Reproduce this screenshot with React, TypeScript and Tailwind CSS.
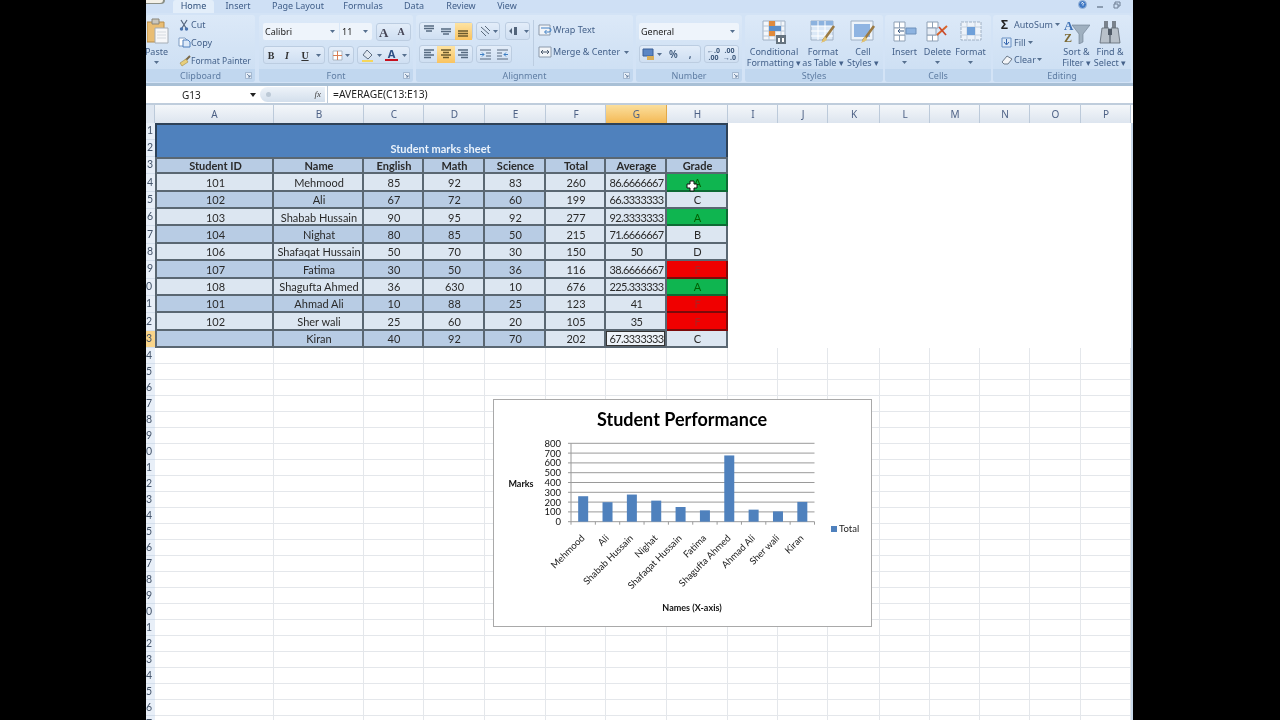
import React from "react";

const ribbonFont = "[font-family:'Noto_Sans',sans-serif]";

const Sv = ({ w = 14, h = 14, vb, children }: { w?: number; h?: number; vb?: string; children: React.ReactNode }) => (
  <svg width={w} height={h} viewBox={vb ?? `0 0 ${w} ${h}`} className="shrink-0">{children}</svg>
);

const Arrow = () => <Sv w={5} h={3}><path d="M0 0h5L2.5 3z" fill="#56708f" /></Sv>;

const Launcher = () => (
  <Sv w={7} h={7}>
    <path d="M.5.5h6v6h-6z" fill="#e6eef8" stroke="#8fa6c0" strokeWidth=".7" />
    <path d="M2 2l3 3M5 3v2H3" stroke="#5b7595" strokeWidth=".8" fill="none" />
  </Sv>
);

function Group({ w, title, launcher, children }: { w: string; title: string; launcher?: boolean; children: React.ReactNode }) {
  return (
    <div className={`${w} flex h-[67px] shrink-0 flex-col overflow-hidden rounded-[3px] bg-gradient-to-b from-[#dce9f8] via-[#d3e3f5] to-[#cbdef3]`}>
      <div className="flex min-h-0 flex-1">{children}</div>
      <div className="relative flex h-[13px] shrink-0 items-center justify-center bg-[#c1d7ef] text-[9px] text-[#5f7da3]">
        {title}
        {launcher && <span className="absolute right-[3px] top-[3px] flex"><Launcher /></span>}
      </div>
    </div>
  );
}

const Box = ({ className = "", children }: { className?: string; children: React.ReactNode }) => (
  <div className={`flex h-[18px] items-center rounded-[3px] border border-[#bccde1] bg-gradient-to-b from-[#e3edf9] to-[#cfdff2] ${className}`}>{children}</div>
);

function Lines({ kind, hot }: { kind: "top" | "mid" | "bot" | "l" | "c" | "r"; hot?: boolean }) {
  const stroke = hot ? "#6b5a2c" : "#566a80";
  const rows: Record<string, number[][]> = {
    top: [[2, 12, 2], [2, 12, 4.5], [4, 10, 7]],
    mid: [[2, 12, 5], [2, 12, 7.5], [4, 10, 10]],
    bot: [[2, 12, 7], [2, 12, 9.5], [2, 12, 12]],
    l: [[2, 12, 3], [2, 9, 5.5], [2, 12, 8], [2, 9, 10.5]],
    c: [[2, 12, 3], [4, 10, 5.5], [2, 12, 8], [4, 10, 10.5]],
    r: [[2, 12, 3], [5, 12, 5.5], [2, 12, 8], [5, 12, 10.5]],
  };
  return (
    <div className={`flex h-[17px] w-[18px] items-center justify-center ${hot ? "bg-gradient-to-b from-[#fde3a2] to-[#f9c35f]" : ""}`}>
      <Sv>{rows[kind].map((r, i) => <path key={i} d={`M${r[0]} ${r[2]}H${r[1]}`} stroke={stroke} strokeWidth="1.5" />)}</Sv>
    </div>
  );
}

const Big = ({ w, label, icon, arrow }: { w: string; label: React.ReactNode; icon: React.ReactNode; arrow?: boolean }) => (
  <div className={`${w} flex shrink-0 flex-col items-center pt-[4px] text-center text-[9px] leading-[10.5px] text-[#44618a]`}>
    <div className="flex h-[25px] items-center">{icon}</div>
    <div className="mt-[3px] whitespace-nowrap">{label}</div>
    {arrow && <div className="mt-[3px] flex"><Arrow /></div>}
  </div>
);

const CondIcon = () => (
  <Sv w={24} h={24}>
    <path d="M1 1h22v19H1z" fill="#f4f7fb" stroke="#9fb0c4" />
    <path d="M7 1v19M13 1v19M19 1v19M1 6h22M1 11h22M1 16h22" stroke="#b8c6d6" />
    <path d="M7 1h6v5H7z" fill="#e08a3c" />
    <path d="M7 6h12v5H7z" fill="#5b8ec9" />
    <path d="M7 11h6v5H7z" fill="#e08a3c" />
    <path d="M14 15h10v9H14z" fill="#65737f" />
    <path d="M16 18h2v4h-2zM20 18h2v4h-2z" fill="#fff" />
  </Sv>
);
const TableIcon = () => (
  <Sv w={26} h={25}>
    <path d="M1 2h22v19H1z" fill="#dbe8f6" stroke="#9fb0c4" />
    <path d="M1 2h22v5H1z" fill="#8cb2de" />
    <path d="M8 2v19M15 2v19M1 7h22M1 12h22M1 17h22" stroke="#fff" />
    <path d="M24 7l-8 11-3 4" stroke="#9b7b45" strokeWidth="2.6" fill="none" />
    <path d="M15 17l-4 7 6-3z" fill="#e4c36e" />
  </Sv>
);
const StylesIcon = () => (
  <Sv w={26} h={25}>
    <path d="M1 2h22v19H1z" fill="#edf3fa" stroke="#9fb0c4" />
    <path d="M4 5h16v13H4z" fill="#8fb4e2" />
    <path d="M24 7l-8 11-3 4" stroke="#9b7b45" strokeWidth="2.6" fill="none" />
    <path d="M15 17l-4 7 6-3z" fill="#e4c36e" />
  </Sv>
);
const InsertIcon = () => (
  <Sv w={24} h={22}>
    <path d="M1 1h11v6H1zM1 14h11v6H1z" fill="#fff" stroke="#8fa1b6" />
    <path d="M1 7h11v7H1z" fill="#fff" stroke="#8fa1b6" />
    <path d="M13 7h10v6H13z" fill="#8db3e0" stroke="#6c90bb" />
    <path d="M11 10H5M7 8l-2 2 2 2" stroke="#3d5c85" fill="none" />
    <path d="M6.500 1v6M6.500 14v6" stroke="#8fa1b6" />
  </Sv>
);
const DeleteIcon = () => (
  <Sv w={24} h={22}>
    <path d="M1 1h11v6H1zM1 14h11v6H1z" fill="#fff" stroke="#8fa1b6" />
    <path d="M1 7h9v7H1z" fill="#e6edf6" stroke="#8fa1b6" />
    <path d="M6.500 1v6M6.500 14v6" stroke="#8fa1b6" />
    <path d="M11 14l10-9" stroke="#d9642b" strokeWidth="2" />
    <path d="M13 6l7 8" stroke="#c7472a" strokeWidth="1.6" />
  </Sv>
);
const FormatIcon = () => (
  <Sv w={24} h={24}>
    <path d="M2 2h20v18H2z" fill="#edf3fa" stroke="#9fb0c4" strokeDasharray="3 1" />
    <path d="M8 2v18M16 2v18M2 7h20M2 15h20" stroke="#c4d0de" />
    <path d="M8 7h8v8H8z" fill="#6fa0d9" />
  </Sv>
);
const SortIcon = () => (
  <Sv w={27} h={25}>
    <text x="1" y="11" fontSize="13" fontWeight="700" fill="#3d70b4" fontFamily="Liberation Serif, serif">A</text>
    <text x="1" y="23" fontSize="12" fontWeight="700" fill="#7d6a33" fontFamily="Liberation Serif, serif">Z</text>
    <path d="M9 6h18l-7 9v8l-4 2V15z" fill="#9fb0c0" stroke="#6b7c8e" strokeWidth=".6" />
  </Sv>
);
const FindIcon = () => (
  <Sv w={24} h={25}>
    <path d="M6 2h4v8H6zM14 2h4v8h-4z" fill="#79828c" />
    <path d="M4 9h7l1 15H2zM13 9h7l2 15H12z" fill="#b8c1ca" stroke="#5d6772" strokeWidth=".8" />
    <path d="M10 10h4v6h-4z" fill="#4f5a66" />
  </Sv>
);
const PasteIcon = () => (
  <Sv w={22} h={26}>
    <path d="M0 4h17v20H0z" fill="#e9bd73" stroke="#b88d4a" />
    <path d="M5 1h7v5H5z" fill="#c9c6bd" stroke="#8a8578" />
    <path d="M8 10h13v15H8z" fill="#f6f7f9" stroke="#a5adb6" />
    <path d="M10 14h9M10 17h9M10 20h9" stroke="#d5dae0" />
  </Sv>
);

const Tab = ({ w, label, active }: { w: string; label: string; active?: boolean }) => (
  <div className={`${w} flex h-[13px] shrink-0 items-center justify-center pb-[2px] text-[9px] ${active ? "rounded-t-[3px] bg-[#e3eefa] text-[#2f4f7a]" : "text-[#3f5d88]"}`}>{label}</div>
);

const cols = [
  ["A", "w-[119px]"], ["B", "w-[90px]"], ["C", "w-[60px]"], ["D", "w-[61px]"], ["E", "w-[61px]"], ["F", "w-[60px]"], ["G", "w-[61px]"], ["H", "w-[61px]"],
  ["I", "w-[50px]"], ["J", "w-[50px]"], ["K", "w-[52px]"], ["L", "w-[50px]"], ["M", "w-[50px]"], ["N", "w-[50px]"], ["O", "w-[51px]"], ["P", "w-[50px]"],
];

const data: [string, string, string, string, string, string, string, string][] = [
  ["101", "Mehmood", "85", "92", "83", "260", "86.6666667", "A"],
  ["102", "Ali", "67", "72", "60", "199", "66.3333333", "C"],
  ["103", "Shabab Hussain", "90", "95", "92", "277", "92.3333333", "A"],
  ["104", "Nighat", "80", "85", "50", "215", "71.6666667", "B"],
  ["106", "Shafaqat Hussain", "50", "70", "30", "150", "50", "D"],
  ["107", "Fatima", "30", "50", "36", "116", "38.6666667", "F"],
  ["108", "Shagufta Ahmed", "36", "630", "10", "676", "225.333333", "A"],
  ["101", "Ahmad Ali", "10", "88", "25", "123", "41", "F"],
  ["102", "Sher wali", "25", "60", "20", "105", "35", "F"],
  ["", "Kiran", "40", "92", "70", "202", "67.3333333", "C"],
];
const headers = ["Student ID", "Name", "English", "Math", "Science", "Total", "Average", "Grade"];

const bars: [string, number][] = [
  ["Mehmood", 260], ["Ali", 199], ["Shabab Hussain", 277], ["Nighat", 215], ["Shafaqat Hussain", 150],
  ["Fatima", 116], ["Shagufta Ahmed", 676], ["Ahmad Ali", 123], ["Sher wali", 105], ["Kiran", 202],
];

function RowLabel({ n, hot }: { n: number; hot?: boolean }) {
  return (
    <div className={`flex h-full w-[9px] shrink-0 items-center justify-end overflow-hidden border-b border-[#d3deeb] text-[10.5px] text-[#44546a] ${hot ? "bg-[#f8d48a]" : "bg-[#e8eff8]"}`}>
      <span className={`whitespace-nowrap ${n > 9 ? "pr-[3px]" : "pr-[2px]"}`}>{n}</span>
    </div>
  );
}

function Chart() {
  const x0 = 77, w = 243.5, yb = 121.7, ph = 78.4;
  return (
    <div className="absolute left-[347px] top-[276px] h-[228px] w-[379px] border border-[#a9a9a9] bg-white">
      <svg width="377" height="226" viewBox="0 0 377 226" fontFamily="Lato, sans-serif">
        <text x="188" y="26" textAnchor="middle" fontSize="18" fontWeight="700" fill="#000">Student Performance</text>
        {[0, 100, 200, 300, 400, 500, 600, 700, 800].map((v) => {
          const y = yb - (v / 800) * ph;
          return (
            <g key={v}>
              <path d={`M${x0 - 3} ${y}H${x0 + w}`} stroke="#9a9a9a" strokeWidth="1" />
              <text x={67} y={y + 3.5} textAnchor="end" fontSize="9.5" fill="#111">{v}</text>
            </g>
          );
        })}
        <path d={`M${x0} ${yb - ph}V${yb}`} stroke="#9a9a9a" />
        {bars.map(([name, v], i) => {
          const cx = x0 + w * (i + 0.5) / 10;
          const h = (v / 800) * ph;
          return (
            <g key={name}>
              <rect x={cx - 5} y={yb - h} width="10" height={h} fill="#4f81bd" />
              <path d={`M${x0 + (w * i) / 10} ${yb}v3`} stroke="#9a9a9a" />
              <text transform={`translate(${cx + 2} ${yb + 17}) rotate(-45)`} textAnchor="end" fontSize="9.500" fill="#222">{name}</text>
            </g>
          );
        })}
        <path d={`M${x0 + w} ${yb}v3`} stroke="#9a9a9a" />
        <text x="27" y="87" textAnchor="middle" fontSize="9" fontWeight="700" fill="#111">Marks</text>
        <text x="198" y="211" textAnchor="middle" fontSize="9" fontWeight="700" fill="#111">Names (X-axis)</text>
        <rect x="337" y="126" width="6" height="6" fill="#4f81bd" />
        <text x="345" y="132" fontSize="9.500" fill="#222">Total</text>
      </svg>
    </div>
  );
}

export default function App() {
  return (
    <div className="flex h-[720px] w-[1280px] overflow-hidden bg-black">
      <div className="w-[146px] shrink-0" />
      <div className={`relative flex w-[987px] shrink-0 flex-col overflow-hidden bg-white blur-[0.35px] ${ribbonFont}`}>
        {/* tabs */}
        <div className="flex h-[13px] shrink-0 bg-[#cfe0f5] pl-[27px]">
          <Tab w="w-[41px]" label="Home" active />
          <Tab w="w-[48px]" label="Insert" />
          <Tab w="w-[72px]" label="Page Layout" />
          <Tab w="w-[58px]" label="Formulas" />
          <Tab w="w-[44px]" label="Data" />
          <Tab w="w-[50px]" label="Review" />
          <Tab w="w-[42px]" label="View" />
          <div className="ml-auto flex items-center gap-[9px] pb-[4px] pr-[12px]">
            <Sv w={9} h={9}><circle cx="4.500" cy="4.500" r="4" fill="#3f78c4" stroke="#9fb8d8" /><path d="M3.500 3.500a1 1 0 1 1 1.500 1v1" stroke="#fff" fill="none" /></Sv>
            <Sv w={8} h={8}><path d="M1 6h6" stroke="#6e7f94" strokeWidth="1.4" /></Sv>
            <Sv w={8} h={8}><path d="M2 1h5v4H2z" fill="none" stroke="#6e7f94" /><path d="M1 3h4v4H1z" fill="#cfe0f5" stroke="#6e7f94" /></Sv>
          </div>
        </div>
        <span className="absolute left-0 top-0 h-[4px] w-[19px] rounded-br-full bg-[#8b8f86]" />
        <span className="absolute left-0 top-0 h-[3px] w-[17px] rounded-br-full bg-[#f4f1e8]" />

        {/* ribbon */}
        <div className="flex h-[70px] shrink-0 items-start bg-[#d3e3f6] pt-[2px]">
          <Group w="w-[109px]" title="Clipboard" launcher>
            <div className="flex w-[31px] shrink-0 flex-col items-center text-[9px] text-[#44618a]">
              <div className="-ml-[8px] mt-[3px] flex"><PasteIcon /></div>
              <span className="-ml-[10px] mt-[3px] leading-[10px]">Paste</span>
              <div className="-ml-[10px] mt-[4px] flex"><Arrow /></div>
            </div>
            <div className="flex flex-col gap-[6px] pt-[4px] text-[9px] leading-[11.500px] text-[#44618a]">
              <div className="flex items-center whitespace-nowrap"><div className="flex w-[14px] shrink-0 justify-center"><Sv w={10} h={12}><path d="M2 1l5 8M8 1L3 9" stroke="#54657d" fill="none" strokeWidth="1.200" /><circle cx="2.500" cy="10" r="1.700" fill="#4a73ad" /><circle cx="7.500" cy="10" r="1.700" fill="#4a73ad" /></Sv></div>Cut</div>
              <div className="flex items-center whitespace-nowrap"><div className="flex w-[14px] shrink-0 justify-center"><Sv w={13} h={11}><path d="M1 1h6l2 2v6H1z" fill="#fff" stroke="#7e9cc2" /><path d="M5 3h5l2 2v5H5z" fill="#dce9f8" stroke="#4f7fbc" /></Sv></div>Copy</div>
              <div className="flex items-center whitespace-nowrap text-[8.5px]"><div className="flex w-[14px] shrink-0 justify-center"><Sv w={13} h={12}><path d="M12 1L7 6" stroke="#7a6a4a" strokeWidth="2" /><path d="M8 4L2 8l2 3 6-4z" fill="#e8cf7c" stroke="#a18a48" strokeWidth=".6" /></Sv></div>Format Painter</div>
            </div>
          </Group>
          <div className="w-[4px] shrink-0" />
          <Group w="w-[154px]" title="Font" launcher>
            <div className="flex flex-col gap-[5px] pl-[4px] pt-[8px]">
              <div className="flex gap-[1px]">
                <div className="flex h-[17px] w-[76px] items-center justify-between rounded-l-[2px] bg-[#eef4fb] pl-[2px] pr-[4px] text-[9px] text-[#222]">Calibri<Arrow /></div>
                <div className="flex h-[17px] w-[32px] items-center justify-between rounded-r-[2px] bg-[#eef4fb] pl-[2px] pr-[4px] text-[9px] text-[#222]">11<Arrow /></div>
                <Box className="ml-[3px] w-[35px] gap-[9px] pl-[2px]">
                  <span className="text-[13px] font-bold leading-none text-[#445] [font-family:'Liberation_Serif',serif]">A</span>
                  <span className="text-[10px] font-bold leading-none text-[#445] [font-family:'Liberation_Serif',serif]">A</span>
                </Box>
              </div>
              <div className="flex">
                <Box className="w-[62px] text-[10px] text-[#333] [font-family:'Liberation_Serif',serif]">
                  <b className="w-[14px] text-center">B</b><b className="w-[18px] text-center"><i>I</i></b><b className="w-[18px] text-center underline">U</b><span className="ml-[2px] flex"><Arrow /></span>
                </Box>
                <Box className="ml-[3px] w-[26px] justify-center gap-[2px]">
                  <Sv w={11} h={11}><path d="M1 1h9v9H1z" fill="#fff" stroke="#aab5c2" /><path d="M5.500 1v9M1 5.500h9" stroke="#d87e55" /></Sv><Arrow />
                </Box>
                <Box className="ml-[3px] w-[53px] justify-center gap-[3px]">
                  <Sv w={13} h={13}><path d="M6 1l5 5-4 4-5-4z" fill="#dfe7f0" stroke="#5f6f83" /><path d="M1 11h11v2H1z" fill="#f5d65b" /></Sv><Arrow />
                  <div className="flex w-[14px] flex-col items-center text-[11px] font-bold leading-[10px] text-[#2d4f84]">A<span className="block h-[2px] w-[13px] bg-[#c6101e]" /></div><Arrow />
                </Box>
              </div>
            </div>
          </Group>
          <div className="w-[3px] shrink-0" />
          <Group w="w-[217px]" title="Alignment" launcher>
            <div className="flex shrink-0 flex-col gap-[5px] pl-[3px] pt-[7px]">
              <div className="flex items-center">
                <Box className="w-[54px]"><Lines kind="top" /><Lines kind="mid" /><Lines kind="bot" hot /></Box>
                <Box className="ml-[3px] w-[24px] justify-center gap-[1px]"><Sv w={13} h={12}><path d="M2 2l8 7M2 6l5 5M6 1l5 5" stroke="#5a6a7c" /></Sv><Arrow /></Box>
                <Box className="ml-[5px] w-[25px] gap-[6px] pl-[2px]"><Sv w={10} h={10}><path d="M1 5l3-3v6zM6 1h3v8H6z" fill="#52647a" /></Sv><Arrow /></Box>
              </div>
              <div className="flex items-center">
                <Box className="w-[54px]"><Lines kind="l" /><Lines kind="c" hot /><Lines kind="r" /></Box>
                <Box className="ml-[3px] w-[36px] justify-center gap-[4px]">
                  <Sv w={13} h={12}><path d="M1 2h11M7 5h5M7 8h5M1 11h11" stroke="#56687e" /><path d="M1 6.500h4M3 4.500l2 2-2 2" stroke="#3d7fc4" fill="none" /></Sv>
                  <Sv w={13} h={12}><path d="M1 2h11M1 5h5M1 8h5M1 11h11" stroke="#56687e" /><path d="M12 6.500H8M10 4.500l-2 2 2 2" stroke="#3d7fc4" fill="none" /></Sv>
                </Box>
              </div>
            </div>
            <div className="ml-[3px] mt-[5px] h-[46px] w-px shrink-0 bg-[#bccde1]" />
            <div className="flex shrink-0 flex-col gap-[10px] whitespace-nowrap pl-[4px] pt-[9px] text-[9px] leading-[12px] text-[#44618a]">
              <div className="flex items-center gap-[1px]"><Sv w={14} h={12}><path d="M1 1h11v10H1z" fill="#f2f5f9" stroke="#8b99aa" /><path d="M3 4h8a2 2 0 0 1 0 4H7M8.500 6l-2 2 2 2" stroke="#3d7fc4" fill="none" /></Sv>Wrap Text</div>
              <div className="flex items-center gap-[1px]"><Sv w={14} h={12}><path d="M1 1h12v10H1z" fill="#f2f5f9" stroke="#8b99aa" /><path d="M3 6h8M3 6l2-2M3 6l2 2M11 6l-2-2M11 6l-2 2" stroke="#4a5a6e" fill="none" /></Sv>Merge &amp; Center<span className="ml-[3px] flex"><Arrow /></span></div>
            </div>
          </Group>
          <div className="w-[3px] shrink-0" />
          <Group w="w-[106px]" title="Number" launcher>
            <div className="flex flex-col gap-[5px] pl-[3px] pt-[8px]">
              <div className="flex h-[17px] w-[100px] items-center justify-between rounded-[2px] bg-[#eef4fb] pl-[2px] pr-[4px] text-[9px] text-[#222]">General<Arrow /></div>
              <div className="flex">
                <Box className="w-[62px] pl-[2px] text-[10px] font-semibold text-[#3a5578]">
                  <Sv w={13} h={13}><path d="M1 1h10v7H1z" fill="#5b86c4" stroke="#3a5f96" /><path d="M5 8h7v4H5z" fill="#d8ae5a" /></Sv>
                  <span className="ml-[2px] flex"><Arrow /></span><span className="ml-[7px]">%</span><span className="ml-[11px]">,</span>
                </Box>
                <Box className="ml-[3px] w-[35px] justify-center gap-[3px] text-[7px] font-bold leading-[7px] text-[#3a5578]">
                  <span className="block text-center">←.0<br />.00</span><span className="block text-center">.00<br />→.0</span>
                </Box>
              </div>
            </div>
          </Group>
          <div className="w-[3px] shrink-0" />
          <Group w="w-[138px]" title="Styles">
            <Big w="w-[58px]" icon={<CondIcon />} label={<>Conditional<br />Formatting ▾</>} />
            <Big w="w-[40px]" icon={<TableIcon />} label={<>Format<br />as Table ▾</>} />
            <Big w="w-[40px]" icon={<StylesIcon />} label={<>Cell<br />Styles ▾</>} />
          </Group>
          <div className="w-[2px] shrink-0" />
          <Group w="w-[106px]" title="Cells">
            <div className="w-[3px] shrink-0" />
            <Big w="w-[33px]" icon={<InsertIcon />} label="Insert" arrow />
            <Big w="w-[33px]" icon={<DeleteIcon />} label="Delete" arrow />
            <Big w="w-[33px]" icon={<FormatIcon />} label="Format" arrow />
          </Group>
          <div className="w-[2px] shrink-0" />
          <Group w="w-[138px]" title="Editing">
            <div className="flex w-[67px] shrink-0 flex-col gap-[6px] whitespace-nowrap pl-[8px] pt-[4px] text-[9px] leading-[11.500px] text-[#44618a]">
              <div className="flex items-center gap-[2px]"><span className="w-[11px] text-[12px] font-bold leading-[11px] text-[#222]">Σ</span>AutoSum<span className="flex"><Arrow /></span></div>
              <div className="flex items-center gap-[2px]"><Sv w={11} h={11}><path d="M1 1h9v9H1z" fill="#dbe8f7" stroke="#6b91c4" /><path d="M5.500 2v5M3 5l2.500 3L8 5" stroke="#2f62ab" fill="none" /></Sv>Fill<span className="flex"><Arrow /></span></div>
              <div className="flex items-center gap-[1px]"><Sv w={12} h={10}><path d="M1 7l5-6 5 3-4 5H3z" fill="#f2f4f7" stroke="#6d7a8a" /></Sv>Clear<span className="flex"><Arrow /></span></div>
            </div>
            <Big w="w-[33px]" icon={<SortIcon />} label={<>Sort &amp;<br />Filter ▾</>} />
            <Big w="w-[34px]" icon={<FindIcon />} label={<>Find &amp;<br />Select ▾</>} />
          </Group>
        </div>

        <div className="h-[3px] shrink-0 bg-[#a9c0d6]" />

        {/* formula bar */}
        <div className="flex h-[17px] shrink-0 items-center bg-white text-[10px] text-[#222]">
          <div className="flex w-[114px] shrink-0 items-center justify-between pl-[36px] pr-[4px] pt-[1px]">G13<Sv w={6} h={4}><path d="M0 0h6L3 4z" fill="#222" /></Sv></div>
          <div className="flex h-[15px] w-[65px] shrink-0 items-center justify-between rounded-l-full bg-gradient-to-b from-[#eef3f9] to-[#d3dfec] pl-[6px] pr-[4px]">
            <span className="block h-[5px] w-[5px] rounded-full bg-[#bcc9d6]" />
            <span className="text-[9px] italic text-[#444] [font-family:'Liberation_Serif',serif]">fx</span>
          </div>
          <div className="ml-[2px] h-[17px] w-px shrink-0 bg-[#bdcad8]" />
          <div className="pl-[5px] pt-[1px] text-[10.3px]">=AVERAGE(C13:E13)</div>
        </div>
        <div className="h-[2px] shrink-0 bg-[#bfcddc]" />

        {/* column headers */}
        <div className="flex h-[18px] shrink-0">
          <div className="w-[9px] shrink-0 border-r border-[#bccada] bg-[#dfe7f1]" />
          {cols.map(([c, w]) => (
            <div key={c} className={`${w} flex shrink-0 items-center justify-center border-r pl-[1px] pt-[1px] text-[10px] text-[#4d6185] ${c === "G" ? "border-[#e2a948] bg-gradient-to-b from-[#fbdf9c] to-[#f3b953]" : "border-[#bccada] bg-gradient-to-b from-[#f4f7fa] to-[#dde5ef]"}`}>{c}</div>
          ))}
        </div>

        {/* sheet */}
        <div className="relative min-h-0 flex-1 text-[#2a2a2a] [font-family:Lato,sans-serif]">
          <div className="absolute right-0 top-0 h-full w-[2px] bg-[#c8d8ea]" />
          <div className="flex h-[34px]">
            <div className="flex w-[9px] shrink-0 flex-col">
              <div className="h-[17px]"><RowLabel n={1} /></div>
              <div className="h-[17px]"><RowLabel n={2} /></div>
            </div>
            <div className="flex w-[573px] shrink-0 items-end justify-center border-2 border-b-0 border-[#2e4258] bg-[#4f81bd] pr-[2px] text-[11px] font-bold leading-[16px] text-[#eaf2fb]">Student marks sheet</div>
          </div>
          <div className="flex h-[17.360px]">
            <RowLabel n={3} />
            {headers.map((h, i) => (
              <div key={h} className={`${cols[i][1]} flex shrink-0 items-center justify-center border-2 border-l-0 border-[#5a6772] bg-[#b8cce4] pl-[2px] pt-[1px] text-[11px] font-bold ${i === 0 ? "border-l-2" : ""}`}>{h}</div>
            ))}
          </div>
          {data.map((r, ri) => (
            <div key={ri} className="relative flex h-[17.360px]">
              <RowLabel n={ri + 4} hot={ri === 9} />
              {r.map((v, ci) => {
                const fill = ci >= 5 || ri % 2 === 0 ? "bg-[#dce6f1]" : "bg-[#b8cce4]";
                const green = ci === 7 && v === "A";
                const red = ci === 7 && v === "F";
                const sel = ci === 6 && ri === 9;
                return (
                  <div key={ci} className={`${cols[ci][1]} flex shrink-0 items-center justify-center whitespace-nowrap border-b-2 border-r-2 pl-[2px] pt-[2px] text-[11px] ${ci === 6 ? "tracking-[-0.6px]" : ""} ${ci === 0 ? "border-l-2" : ""} ${green ? "border-[#0d6b34] bg-[#0fb550] text-[#006100]" : red ? "border-[#7c0a0a] bg-[#f00000] text-[#b02020]" : sel ? "border-[#5a6772] bg-[#eef3f9] shadow-[inset_0_0_0_1px_#333]" : `border-[#5a6772] ${fill}`}`}>{v}</div>
                );
              })}
            </div>
          ))}
          {Array.from({ length: 24 }).map((_, i) => (
            <div key={i} className="flex h-[16px]">
              <RowLabel n={i + 14} />
              {cols.map(([c, w]) => (
                <div key={c} className={`${w} shrink-0 border-b border-r border-[#e4e7eb]`} />
              ))}
            </div>
          ))}
          <Chart />
          {/* cursor */}
          <div className="absolute left-[540px] top-[57px] flex">
            <Sv w={12} h={12}>
              <path d="M4 1h4v3h3v4H8v3H4V8H1V4h3z" fill="#fff" stroke="#111" strokeWidth="1" />
            </Sv>
          </div>
        </div>
      </div>
    </div>
  );
}
